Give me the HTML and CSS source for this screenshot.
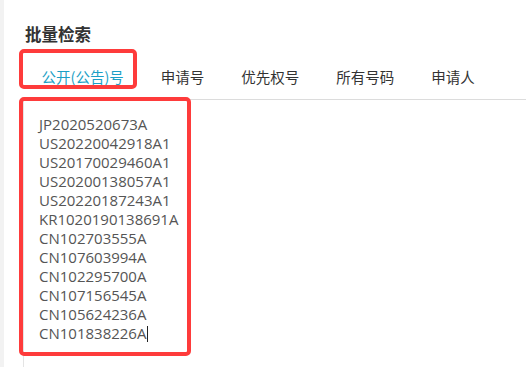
FILE: index.html
```html
<!doctype html>
<html lang="zh-CN">
  <head>
    <meta charset="UTF-8" />
    <meta name="viewport" content="width=device-width, initial-scale=1.0" />
    <title>批量检索</title>
    <link rel="stylesheet" href="styles.css">
  </head>
  <body>
    <div class="panel">
      <h2 class="title">批量检索</h2>
      <div class="tabs">
        <div class="tab active">公开(公告)号</div>
        <div class="tab">申请号</div>
        <div class="tab">优先权号</div>
        <div class="tab">所有号码</div>
        <div class="tab">申请人</div>
      </div>
      <div class="numbers">
        <div>JP2020520673A</div>
        <div>US20220042918A1</div>
        <div>US20170029460A1</div>
        <div>US20200138057A1</div>
        <div>US20220187243A1</div>
        <div>KR1020190138691A</div>
        <div>CN102703555A</div>
        <div>CN107603994A</div>
        <div>CN102295700A</div>
        <div>CN107156545A</div>
        <div>CN105624236A</div>
        <div>CN101838226A<span class="caret"></span></div>
      </div>
      <!-- annotation boxes drawn over the screenshot -->
      <div class="mark mark-tab"></div>
      <div class="mark mark-list"></div>
    </div>
  </body>
</html>
```

FILE: styles.css
```css
body {
  margin: 0;
  background-color: #f2f2f2;
  font-family: "Noto Sans CJK SC", "Noto Sans", sans-serif;
  overflow: hidden;
}
.panel {
  position: relative;
  margin-left: 4px;
  height: 100vh;
  padding: 22px 0 0 19px;
  box-sizing: border-box;
  background-color: #fff;
}
.title {
  margin: 0 0 0 2px;
  font-size: 16.5px;
  line-height: 24px;
  font-weight: bold;
  color: #333;
}
.tabs {
  display: flex;
  margin-top: 13px;
  height: 40px;
  border-bottom: 1px solid #dcdcdc;
}
.tab {
  padding: 0 18.5px;
  font-size: 14.5px;
  line-height: 35px;
  color: #333;
}
.tab.active {
  color: #1c9fc6;
}
.numbers {
  height: 400px;
  padding: 15px 15px;
  border-left: 1px solid #e4e4e4;
  font-family: "Open Sans", sans-serif;
  font-size: 15px;
  line-height: 19px;
  color: #555;
}
.caret {
  display: inline-block;
  width: 1px;
  height: 16px;
  margin-left: 1px;
  vertical-align: -3px;
  background-color: #222;
}
.mark {
  position: absolute;
  border: 4px solid #fe3b3b;
  border-radius: 5px;
  box-sizing: border-box;
}
.mark-tab {
  left: 15px;
  top: 49px;
  width: 118px;
  height: 40px;
}
.mark-list {
  left: 15px;
  top: 97px;
  width: 172px;
  height: 259px;
}
```
